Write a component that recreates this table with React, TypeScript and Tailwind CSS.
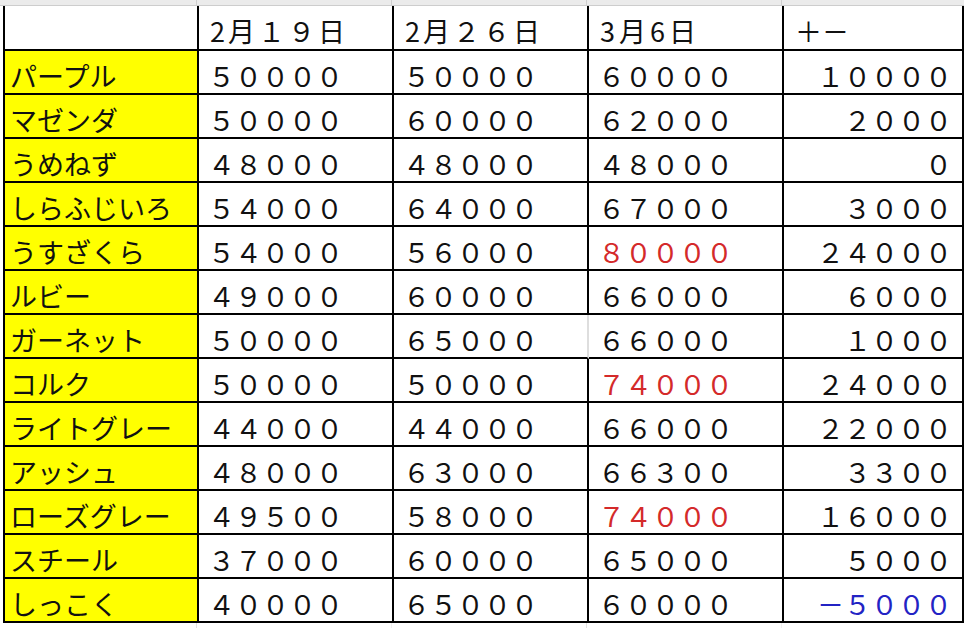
const toWide = (s: string) =>
  s.replace(/[0-9]/g, (d) => String.fromCharCode(d.charCodeAt(0) + 0xfee0)).replace('-', '－');

type Row = {
  name: string;
  a: string;
  b: string;
  c: string;
  diff: string;
  red?: boolean;
  blue?: boolean;
};

const rows: Row[] = [
  { name: 'パープル', a: '50000', b: '50000', c: '60000', diff: '10000' },
  { name: 'マゼンダ', a: '50000', b: '60000', c: '62000', diff: '2000' },
  { name: 'うめねず', a: '48000', b: '48000', c: '48000', diff: '0' },
  { name: 'しらふじいろ', a: '54000', b: '64000', c: '67000', diff: '3000' },
  { name: 'うすざくら', a: '54000', b: '56000', c: '80000', diff: '24000', red: true },
  { name: 'ルビー', a: '49000', b: '60000', c: '66000', diff: '6000' },
  { name: 'ガーネット', a: '50000', b: '65000', c: '66000', diff: '1000' },
  { name: 'コルク', a: '50000', b: '50000', c: '74000', diff: '24000', red: true },
  { name: 'ライトグレー', a: '44000', b: '44000', c: '66000', diff: '22000' },
  { name: 'アッシュ', a: '48000', b: '63000', c: '66300', diff: '3300' },
  { name: 'ローズグレー', a: '49500', b: '58000', c: '74000', diff: '16000', red: true },
  { name: 'スチール', a: '37000', b: '60000', c: '65000', diff: '5000' },
  { name: 'しっこく', a: '40000', b: '65000', c: '60000', diff: '-5000', blue: true },
];

const cols = 'grid grid-cols-[194px_195px_195px_195px_1fr]';
const cell = 'flex items-center border-b-2 border-r-2 border-black text-[27px] leading-none pt-[6px]';

export default function App() {
  return (
    <div
      className="w-[964px] h-[628px] overflow-hidden bg-white text-[#111]"
      style={{ fontFamily: '"Noto Sans CJK JP", "Noto Sans", sans-serif' }}
    >
      {/* strip of the row above */}
      <div className="h-[6px] pl-[3px] bg-[#ebebeb] border-b border-[#cdcdcd]">
        <div className={`${cols} h-full`}>
          <div className="border-r border-[#cfcfcf]" />
          <div className="border-r border-[#cfcfcf]" />
          <div className="border-r border-[#cfcfcf]" />
          <div className="border-r border-[#cfcfcf]" />
          <div />
        </div>
      </div>

      <div className="ml-[3px] border-l-2 border-black">
        <div className={`${cols} h-[45px]`}>
          <div className={cell} />
          <div className={`${cell} pl-[11px] tracking-[3px]`}>2月１９日</div>
          <div className={`${cell} pl-[11px] tracking-[3px]`}>2月２６日</div>
          <div className={`${cell} pl-[11px] tracking-[4px]`}>3月6日</div>
          <div className={`${cell} border-r-0 pl-[11px]`}>＋－</div>
        </div>

        {rows.map((r, i) => (
          <div key={r.name} className={`${cols} h-[44px]`}>
            <div className={`${cell} bg-[#ffff00] pl-[5px]`}>{r.name}</div>
            <div className={`${cell} pl-[9px]`}>{toWide(r.a)}</div>
            <div className={`${cell} pl-[9px] ${i === 6 ? 'border-r-[#dedede]' : ''}`}>{toWide(r.b)}</div>
            <div className={`${cell} pl-[9px] ${r.red ? 'text-[#d42a2a]' : ''}`}>{toWide(r.c)}</div>
            <div className={`${cell} border-r-0 justify-end pr-[10px] ${r.blue ? 'text-[#2323c4]' : ''}`}>
              {toWide(r.diff)}
            </div>
          </div>
        ))}
      </div>

      <div className="h-[8px] pl-[3px]">
        <div className={`${cols} h-full`}>
          <div className="border-r border-[#e2e2e2]" />
          <div className="border-r border-[#f0f0f0]" />
          <div className="border-r border-[#e2e2e2]" />
          <div className="border-r border-[#f0f0f0]" />
          <div />
        </div>
      </div>
    </div>
  );
}
